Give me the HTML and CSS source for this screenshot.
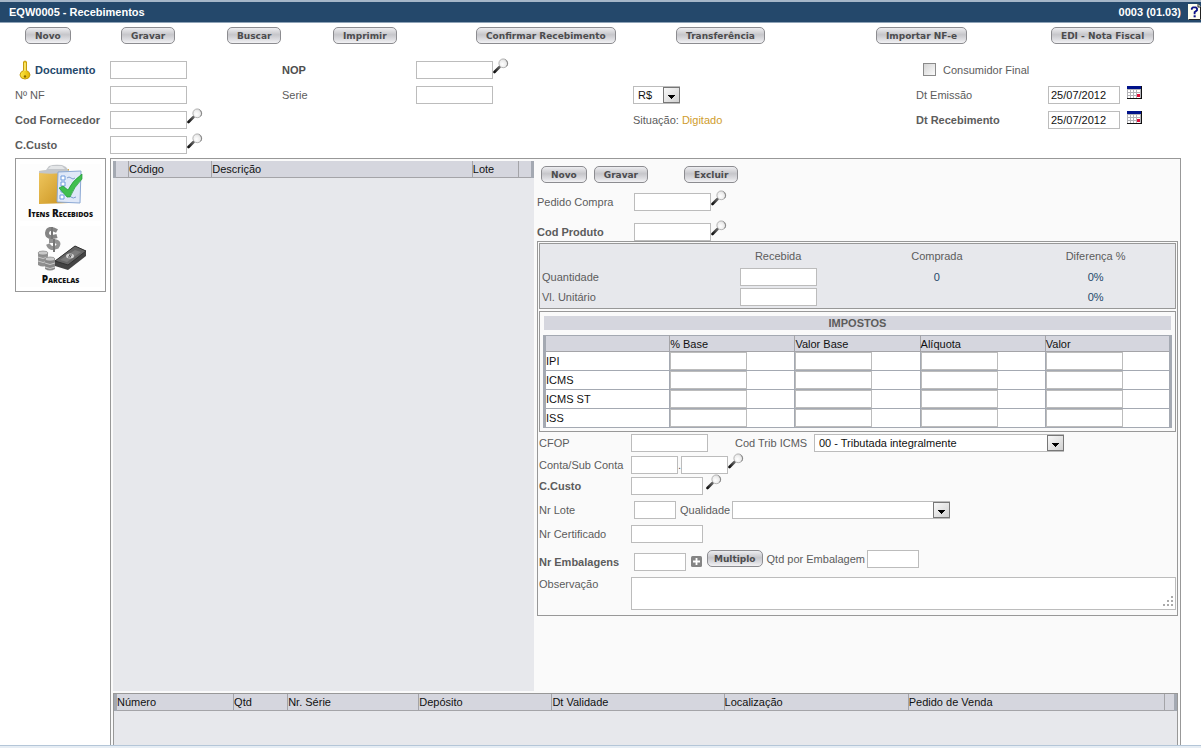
FILE: index.html
```html
<!DOCTYPE html>
<html lang="pt-BR">
<head>
<meta charset="utf-8">
<title>EQW0005 - Recebimentos</title>
<link rel="stylesheet" href="styles.css">
</head>
<body>
<svg class="sprite" aria-hidden="true">
  <defs>
    <linearGradient id="handle" x1="0" y1="1" x2="1" y2="0"><stop offset="0" stop-color="#111"/><stop offset="1" stop-color="#666"/></linearGradient>
    <radialGradient id="lens" cx="0.4" cy="0.6" r="0.7"><stop offset="0" stop-color="#fff"/><stop offset="0.6" stop-color="#ececec"/><stop offset="1" stop-color="#c4c4c4"/></radialGradient>
    <linearGradient id="arrowbg" x1="0" y1="0" x2="1" y2="1"><stop offset="0" stop-color="#fafafa"/><stop offset="1" stop-color="#cfcfcf"/></linearGradient>
    <linearGradient id="folder" x1="0" y1="0" x2="1" y2="1"><stop offset="0" stop-color="#f0c860"/><stop offset="1" stop-color="#c8901c"/></linearGradient>
    <linearGradient id="keyfill" x1="0" y1="0" x2="1" y2="0"><stop offset="0" stop-color="#ffe94a"/><stop offset="1" stop-color="#e0b400"/></linearGradient>
    <symbol id="search" viewBox="0 0 16 16">
      <path d="M1.5 14 L6.5 9" stroke="url(#handle)" stroke-width="2.6" stroke-linecap="round"/>
      <circle cx="10.3" cy="5.3" r="4.4" fill="url(#lens)" stroke="#b4b4b4" stroke-width="1"/>
      <path d="M12.500 1.800 A4.400 4.400 0 0 1 13.500 8.400" fill="none" stroke="#888" stroke-width="1"/>
    </symbol>
    <symbol id="arrow" viewBox="0 0 17 16">
      <rect x="0.5" y="0.5" width="16" height="15" fill="url(#arrowbg)" stroke="#777"/>
      <path d="M5 8h7v1h-1v1h-1v1h-1v1h-1v-1h-1v-1h-1v-1h-1z" fill="#000"/>
    </symbol>
    <symbol id="calendar" viewBox="0 0 15 13">
      <rect width="15" height="13" fill="#111"/>
      <rect width="14" height="3" fill="#00128a"/>
      <rect x="0" y="3" width="14" height="9" fill="#b4b4b8"/>
      <path d="M1 4h2v2h-2zM4 4h2v2h-2zM7 4h2v2h-2zM10 4h3v2h-3zM1 7h2v2h-2zM4 7h2v2h-2zM7 7h2v2h-2zM10 7h3v2h-3zM1 10h2v2h-2zM4 10h2v2h-2zM7 10h2v2h-2zM10 10h3v2h-3z" fill="#fff"/>
      <rect x="10" y="8" width="3" height="3" fill="#e0103a"/>
    </symbol>
  </defs>
</svg>

<header class="titlebar">
  <h1 class="title">EQW0005 - Recebimentos</h1>
  <span class="version">0003 (01.03)</span>
  <button class="iconbtn" type="button" aria-label="Ajuda">
    <svg width="13" height="16" viewBox="0 0 13 16"><path d="M0 0h10l3 3v13H0z" fill="#fffff0"/><path d="M10 0v3h3M0.5 15.5h12V3" fill="none" stroke="#222"/><path d="M3.8 5.8V4.5L5 3.4h2.8L9 4.5V6.3L6.6 8.2v2" fill="none" stroke="#0c1288" stroke-width="1.8"/><path d="M5.6 11.3h2.1v2H5.6z" fill="#0c1288"/></svg>
  </button>
</header>

<nav class="toolbar">
  <button class="btn" type="button">Novo</button>
  <button class="btn" type="button">Gravar</button>
  <button class="btn" type="button">Buscar</button>
  <button class="btn" type="button">Imprimir</button>
  <button class="btn" type="button">Confirmar Recebimento</button>
  <button class="btn" type="button">Transferência</button>
  <button class="btn" type="button">Importar NF-e</button>
  <button class="btn" type="button">EDI - Nota Fiscal</button>
</nav>

<form class="head-form">
  <label class="strong key" for="doc"><svg width="12" height="20" viewBox="0 0 12 20"><path d="M4.5 1.8Q6 .2 7.5 1.8V10.5Q11 12 11 15Q10.500 19 6 19Q1.500 19 1 15Q1 12 4.500 10.500z" fill="url(#keyfill)" stroke="#c49a10"/><path d="M6 3v8" stroke="#fff6a0"/><circle cx="6" cy="16.500" r="1.200" fill="#8a6a00"/></svg>Documento</label>
  <div class="group"><input class="field" id="doc" type="text"></div>
  <label class="semi" for="nop">NOP</label>
  <div class="group wide"><input class="field" id="nop" type="text"><button class="iconbtn lift" type="button" aria-label="Buscar NOP"><svg width="16" height="16"><use href="#search"/></svg></button></div>
  <div class="group final"><input class="check" id="final" type="checkbox"><label for="final">Consumidor Final</label></div>

  <label for="nf">Nº NF</label>
  <div class="group"><input class="field" id="nf" type="text"></div>
  <label for="serie">Serie</label>
  <div class="group"><input class="field" id="serie" type="text"></div>
  <div class="picker currency"><select class="select" aria-label="Moeda"><option>R$</option></select><svg class="arrow" width="17" height="16"><use href="#arrow"/></svg></div>
  <label for="emi">Dt Emissão</label>
  <div class="group gap"><input class="field date" id="emi" type="text" value="25/07/2012"><button class="iconbtn cal" type="button" aria-label="Calendário"><svg width="15" height="13"><use href="#calendar"/></svg></button></div>

  <label class="strong" for="forn">Cod Fornecedor</label>
  <div class="group supplier"><input class="field" id="forn" type="text"><button class="iconbtn lift" type="button" aria-label="Buscar fornecedor"><svg width="16" height="16"><use href="#search"/></svg></button></div>
  <p class="status">Situação: <span class="pending">Digitado</span></p>
  <label class="strong" for="rec">Dt Recebimento</label>
  <div class="group gap"><input class="field date" id="rec" type="text" value="25/07/2012"><button class="iconbtn cal" type="button" aria-label="Calendário"><svg width="15" height="13"><use href="#calendar"/></svg></button></div>

  <label class="strong" for="cc">C.Custo</label>
  <div class="group"><input class="field" id="cc" type="text"><button class="iconbtn lift" type="button" aria-label="Buscar centro de custo"><svg width="16" height="16"><use href="#search"/></svg></button></div>
</form>

<div class="workspace">
  <aside class="side">
    <button class="tab" type="button">
      <svg width="46" height="42" viewBox="0 0 46 42"><path d="M1 7L31 5V39L1 40z" fill="url(#folder)"/><path d="M1 7L8 6 11 2Q16 0 24 1L28 3 31 7Q20 11 1 9z" fill="#c3c6ca"/><path d="M10 5L13 2H24L27 5z" fill="#e3e5e7"/><path d="M20 8L43 7 42 39 19 38z" fill="#dfe8f8" stroke="#8ba8d4"/><path d="M23 12h4v4h-4zM23 18h4v4h-4zM23 24h4v4h-4zM22 31h4v4h-4z" fill="#fff" stroke="#6f9bdd"/><path d="M29 14q2-2 4 0t4 0M29 33q2-2 4 0t5 0" fill="none" stroke="#7d9cce"/><path d="M21 24L25 22 30 26Q34 17 44 10V15Q36 23 32 33L29 33z" fill="#3fbf4e" stroke="#239838" stroke-width=".7"/></svg>
      <span class="caption">Itens Recebidos</span>
    </button>
    <button class="tab" type="button">
      <svg width="54" height="46" viewBox="-2 0 52 46"><g fill="none" stroke="#858585" stroke-width="4"><path d="M20 5Q11 0 10 7Q10 13 20 10"/><path d="M11 18Q13 24 20 21Q24 16 17 15H12" stroke="#929292"/></g><path d="M15 1V13M17 13V26" stroke="#777" stroke-width="2"/><path d="M18 35L38 20 49 25V30L31 44 18 40z" fill="#444"/><path d="M18 35L38 20 49 25 31 39z" fill="#656565" stroke="#333"/><path d="M23 34L38 24 44 26 30 36z" fill="#7c7c7c"/><ellipse cx="33" cy="30" rx="4" ry="2.500" fill="#d0d0d0"/><path d="M35 29H32L34 31H31" fill="none" stroke="#555"/><path d="M1 27v12q5 3 10 0V27z" fill="#909090"/><ellipse cx="6" cy="27" rx="5" ry="2" fill="#c9c9c9" stroke="#777" stroke-width=".6"/><path d="M1 31q5 3 10 0M1 35q5 3 10 0" fill="none" stroke="#c8c8c8"/><path d="M8 33v10q5 3 10 0V33z" fill="#898989"/><ellipse cx="13" cy="33" rx="5" ry="2" fill="#c9c9c9" stroke="#777" stroke-width=".6"/><path d="M8 37q5 3 10 0M8 41q5 3 10 0" fill="none" stroke="#c8c8c8"/></svg>
      <span class="caption">Parcelas</span>
    </button>
  </aside>

  <main class="main">
    <div class="split">
      <section class="list">
        <table class="grid items">
          <colgroup><col class="i1"><col class="i2"><col class="i3"><col class="i4"><col class="i1"></colgroup>
          <thead><tr><th></th><th>Código</th><th>Descrição</th><th>Lote</th><th></th></tr></thead>
        </table>
      </section>

      <form class="detail">
        <div class="actions">
          <button class="btn" type="button">Novo</button>
          <button class="btn save" type="button">Gravar</button>
          <button class="btn" type="button">Excluir</button>
        </div>
        <div class="row lookup"><label for="ped">Pedido Compra</label><div class="group"><input class="field" id="ped" type="text"><button class="iconbtn lift" type="button" aria-label="Buscar pedido"><svg width="16" height="16"><use href="#search"/></svg></button></div></div>
        <div class="row lookup product"><label class="strong" for="prod">Cod Produto</label><div class="group"><input class="field" id="prod" type="text"><button class="iconbtn lift" type="button" aria-label="Buscar produto"><svg width="16" height="16"><use href="#search"/></svg></button></div></div>

        <div class="frame">
          <div class="box totals">
            <table class="sums">
              <thead><tr><th></th><th>Recebida</th><th>Comprada</th><th>Diferença %</th></tr></thead>
              <tbody>
                <tr><td><label for="qtd">Quantidade</label></td><td><input class="field" id="qtd" type="text"></td><td>0</td><td>0%</td></tr>
                <tr><td><label for="vl">Vl. Unitário</label></td><td><input class="field" id="vl" type="text"></td><td></td><td>0%</td></tr>
              </tbody>
            </table>
          </div>
          <div class="box taxes">
            <h2 class="caption-bar">IMPOSTOS</h2>
            <table class="grid tax">
              <thead><tr><th></th><th>% Base</th><th>Valor Base</th><th>Alíquota</th><th>Valor</th></tr></thead>
              <tbody>
                <tr><th scope="row">IPI</th><td><input class="field" type="text" aria-label="IPI % Base"></td><td><input class="field" type="text" aria-label="IPI Valor Base"></td><td><input class="field" type="text" aria-label="IPI Alíquota"></td><td><input class="field" type="text" aria-label="IPI Valor"></td></tr>
                <tr><th scope="row">ICMS</th><td><input class="field" type="text" aria-label="ICMS % Base"></td><td><input class="field" type="text" aria-label="ICMS Valor Base"></td><td><input class="field" type="text" aria-label="ICMS Alíquota"></td><td><input class="field" type="text" aria-label="ICMS Valor"></td></tr>
                <tr><th scope="row">ICMS ST</th><td><input class="field" type="text" aria-label="ICMS ST % Base"></td><td><input class="field" type="text" aria-label="ICMS ST Valor Base"></td><td><input class="field" type="text" aria-label="ICMS ST Alíquota"></td><td><input class="field" type="text" aria-label="ICMS ST Valor"></td></tr>
                <tr><th scope="row">ISS</th><td><input class="field" type="text" aria-label="ISS % Base"></td><td><input class="field" type="text" aria-label="ISS Valor Base"></td><td><input class="field" type="text" aria-label="ISS Alíquota"></td><td><input class="field" type="text" aria-label="ISS Valor"></td></tr>
              </tbody>
            </table>
          </div>

          <div class="row short"><label for="cfop">CFOP</label><div class="group"><input class="field" id="cfop" type="text"><label class="trib" for="trib">Cod Trib ICMS</label><div class="picker tribs"><select class="select" id="trib"><option>00 - Tributada integralmente</option></select><svg class="arrow" width="17" height="16"><use href="#arrow"/></svg></div></div></div>
          <div class="row short"><label for="conta">Conta/Sub Conta</label><div class="group"><input class="field account" id="conta" type="text"><span class="dot">.</span><input class="field account" type="text" aria-label="Sub Conta"><button class="iconbtn lift" type="button" aria-label="Buscar conta"><svg width="16" height="16"><use href="#search"/></svg></button></div></div>
          <div class="row tall"><label class="strong" for="custo">C.Custo</label><div class="group"><input class="field date" id="custo" type="text"><button class="iconbtn lift apart" type="button" aria-label="Buscar custo"><svg width="16" height="16"><use href="#search"/></svg></button></div></div>
          <div class="row tall"><label for="lote">Nr Lote</label><div class="group inset"><input class="field lot" id="lote" type="text"><label class="inline" for="qual">Qualidade</label><div class="picker quality"><select class="select" id="qual"><option></option></select><svg class="arrow" width="17" height="16"><use href="#arrow"/></svg></div></div></div>
          <div class="row tall"><label for="cert">Nr Certificado</label><div class="group"><input class="field date" id="cert" type="text"></div></div>
          <div class="row pack"><label class="strong" for="emb">Nr Embalagens</label><div class="group inset"><input class="field qty" id="emb" type="text"><button class="iconbtn plus" type="button" aria-label="Adicionar"><svg width="11" height="11" viewBox="0 0 11 11"><rect width="11" height="11" rx="1.500" fill="#858585"/><path d="M5.500 2v7M2 5.500h7" stroke="#fff" stroke-width="1.800"/></svg></button><div class="group pack-extra"><button class="btn multiple" type="button">Multiplo</button><label class="inline" for="por">Qtd por Embalagem</label><input class="field qty" id="por" type="text"></div></div></div>
          <div class="row notes"><label for="obs">Observação</label><div class="notes-box"><textarea class="area" id="obs"></textarea><svg class="grip" width="11" height="11" viewBox="0 0 11 11"><path d="M8 0h2v2h-2zM4 4h2v2h-2zM8 4h2v2h-2zM0 8h2v2h-2zM4 8h2v2h-2zM8 8h2v2h-2z" fill="#aaa"/></svg></div></div>
        </div>
      </form>
    </div>

    <section class="serials">
      <table class="grid lots">
        <colgroup><col class="s1"><col class="s2"><col class="s3"><col class="s4"><col class="s5"><col class="s6"><col class="s7"><col class="s8"></colgroup>
        <thead><tr><th>Número</th><th>Qtd</th><th>Nr. Série</th><th>Depósito</th><th>Dt Validade</th><th>Localização</th><th>Pedido de Venda</th><th></th></tr></thead>
      </table>
    </section>
  </main>
</div>
<footer class="edge"></footer>
</body>
</html>
```
FILE: styles.css
```css
* { box-sizing: border-box; }

body {
  margin: 0;
  min-height: 100vh;
  display: flex;
  flex-direction: column;
  background: #fff;
  color: #5c5c5c;
  font: 11px/14px "Liberation Sans", Arial, sans-serif;
}

.sprite { position: absolute; width: 0; height: 0; }

svg { display: block; flex: none; }

.titlebar {
  display: flex;
  align-items: center;
  height: 23px;
  padding-left: 9px;
  border-top: 2px solid #a5b6c8;
  border-bottom: 1px solid #8fa3b7;
  background: #24486b;
  color: #fff;
  font-weight: bold;
}

.title { margin: 0; flex: 1; font-size: 11px; }
.version { margin-right: 7px; }

.iconbtn {
  flex: none;
  margin: 0;
  padding: 0;
  border: 0;
  background: none;
}

.btn {
  flex: none;
  justify-self: start;
  height: 17px;
  padding: 0 9px;
  border: 1px solid #8c8c90;
  border-radius: 5px;
  background: linear-gradient(#ededf0, #c6c6ca 45%, #dcdce0 75%, #f2f2f4);
  color: #4c4c4e;
  font: bold 9px/14px "DejaVu Sans", Verdana, sans-serif;
  white-space: nowrap;
}

.toolbar {
  display: grid;
  grid-template-columns: 96fr 106fr 106fr 143fr 200fr 200fr 175fr 150fr;
  align-items: center;
  height: 25px;
  padding-left: 25px;
}

.head-form {
  display: grid;
  grid-template-columns: 95fr 172fr 134fr 217fr 283fr 132fr 153fr;
  grid-auto-rows: 25px;
  align-items: center;
  padding: 9px 0 1px 15px;
  white-space: nowrap;
}

.strong { font-weight: bold; }
.semi { color: #4e4e4e; font-weight: bold; }
.key { display: flex; align-items: center; gap: 4px; padding-left: 4px; color: #24486b; }

.group { display: flex; align-items: center; white-space: nowrap; }
.wide { grid-column: span 2; }
.final { grid-column: span 2; padding-left: 7px; gap: 7px; }
.supplier { grid-column: span 3; }
.status { margin: 0; }
.pending { color: #cf9c2c; }

.field {
  flex: none;
  display: block;
  width: 77px;
  height: 18px;
  margin: 0;
  padding: 0 2px;
  border: 1px solid #bcbcbc;
  border-radius: 0;
  background: #fff;
  color: #111;
  font: inherit;
}
.date { width: 72px; }
.account { width: 47px; }
.lot { width: 42px; }
.qty { width: 52px; }

.lift { margin-bottom: 8px; }
.apart { margin-left: 3px; }
.gap { gap: 7px; }
.cal { margin-bottom: 4px; }

.check {
  appearance: none;
  width: 13px;
  height: 13px;
  margin: 0;
  border: 1px solid #8a8a8a;
  background: linear-gradient(135deg, #d4d4d4, #fafafa);
}

.picker { position: relative; flex: none; }
.currency { width: 47px; }
.tribs { width: 250px; }
.quality { width: 218px; }
.select {
  appearance: none;
  display: block;
  width: 100%;
  height: 18px;
  margin: 0;
  padding: 0 18px 0 4px;
  border: 1px solid #bcbcbc;
  border-radius: 0;
  background: #fff;
  color: #111;
  font: inherit;
}
.arrow { position: absolute; top: 1px; right: 0; pointer-events: none; }

.workspace { flex: 1; display: flex; align-items: stretch; gap: 4px; padding: 0 20px 0 15px; }

.side {
  flex: none;
  align-self: flex-start;
  width: 91px;
  padding: 5px 4px 4px;
  border: 1px solid #989898;
}
.tab {
  display: flex;
  flex-direction: column;
  align-items: center;
  width: 100%;
  padding: 0;
  border: 0;
  background: #fdfdfd;
}
.tab + .tab { margin-top: 5px; }
.caption {
  color: #111;
  font: 800 10px/15px "Open Sans", "Noto Sans", sans-serif;
  font-variant: small-caps;
  white-space: nowrap;
}

.main {
  flex: 1;
  min-width: 0;
  display: flex;
  flex-direction: column;
  gap: 2px;
  padding: 2px 2px 0;
  border: 1px solid #989898;
  border-bottom: 0;
  background: #fafafa;
}
.split { flex: 1; display: grid; grid-template-columns: 421fr 641fr; gap: 3px; }

.list { background: #e7e8ec; }
.serials { height: 52px; border: 1px solid #989898; border-bottom: 0; background: #e7e8ec; }

.grid {
  width: 100%;
  border-collapse: collapse;
  table-layout: fixed;
  border-left: 3px solid #a4a9b2;
  border-right: 3px solid #a4a9b2;
  color: #111;
}
.grid th { height: 16px; padding: 0; font-weight: normal; text-align: left; line-height: 14px; white-space: nowrap; }
.grid thead th {
  border-bottom: 1px solid #a4a4a8;
  border-right: 1px solid #a4a4a8;
  background: #d5d6de;
}

.i1 { width: 14px; }
.i2 { width: 83px; }
.i3 { width: 260px; }
.i4 { width: 46px; }
.s1 { width: 118px; }
.s2 { width: 54px; }
.s3 { width: 131px; }
.s4 { width: 133px; }
.s5 { width: 172px; }
.s6 { width: 184px; }
.s7 { width: 256px; }
.s8 { width: 11px; }

.actions { display: flex; align-items: center; gap: 7px; height: 27px; padding-left: 4px; }
.save { margin-right: 29px; }

.row { display: grid; grid-template-columns: 92px 1fr; align-items: center; }
.lookup { grid-template-columns: 97px 1fr; height: 27px; }
.product { height: 26px; padding-top: 5px; }

.frame { padding: 1px; border: 1px solid #989898; }
.box { border: 1px solid #989898; }
.totals { padding: 2px 0 1px; background: #e7e8ec; }

.sums { width: 100%; border-collapse: collapse; table-layout: fixed; color: #24486b; text-align: center; }
.sums th { height: 21px; padding: 0 0 1px; color: #5c5c5c; font-weight: normal; }
.sums td { height: 20px; padding: 0; }
.sums td:first-child { padding-left: 2px; color: #5c5c5c; text-align: left; }
.sums .field { margin: 0 auto; }

.taxes { margin-top: 2px; padding: 4px 3px 3px; background: #fafafa; }
.caption-bar { margin: 0 1px 5px; background: #d5d6de; font-size: 11px; line-height: 14px; text-align: center; }
.tax { border-top: 1px solid #a4a9b2; background: #fff; }
.tax th, .tax td { border-right: 1px solid #a4a9b2; border-bottom: 1px solid #a4a9b2; }
.tax td { height: 19px; padding: 0; }

.short { height: 21px; }
.tall { height: 24px; }
.trib { width: 79px; margin-left: 27px; }
.inset { padding-left: 3px; }
.inline { margin: 0 2px 0 4px; }
.dot { width: 3px; }
.pack { height: 31px; }
.plus { margin: 0 5px; }
.multiple { padding: 0 6px; }
.pack-extra { padding-bottom: 6px; }
.notes { align-items: start; padding-bottom: 4px; }
.notes-box { position: relative; }
.area {
  display: block;
  width: 100%;
  height: 33px;
  margin: 0;
  border: 1px solid #bcbcbc;
  background: #fff;
  font: inherit;
  resize: none;
}
.grip { position: absolute; right: 2px; bottom: 3px; }

.edge { height: 3px; border-top: 1px solid #b4c6d8; background: #e6edf4; }
```
